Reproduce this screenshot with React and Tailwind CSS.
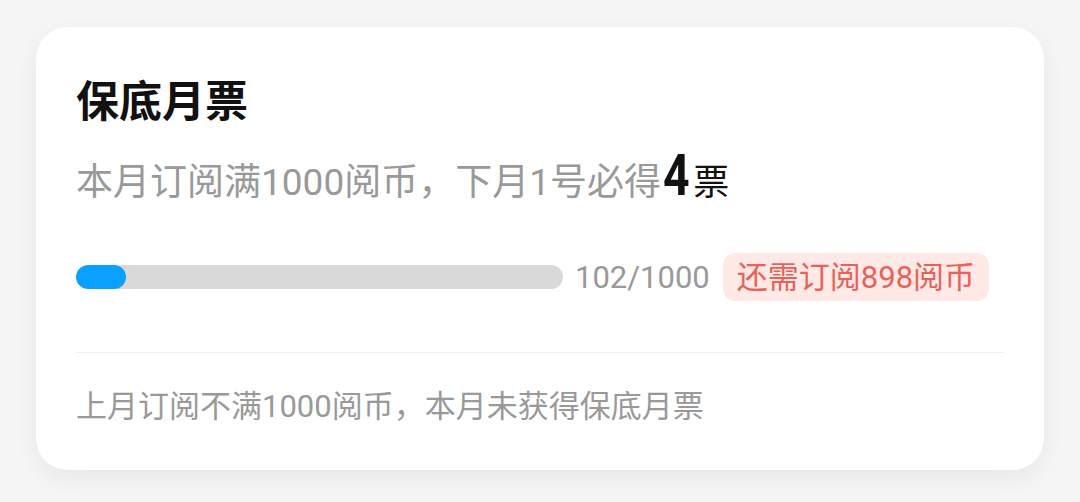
import React from "react";

const FONT = { fontFamily: "Roboto, 'Noto Sans CJK SC', sans-serif" };

const progress = { current: 102, total: 1000 };

export default function App() {
  const pct = (progress.current / progress.total) * 100;

  return (
    <div className="w-[1080px] h-[502px] bg-[#f5f5f5] pt-[27px] pl-[36px]" style={FONT}>
      <div className="w-[1008px] h-[443px] bg-white rounded-[32px] shadow-[0_8px_24px_rgba(0,0,0,0.06)] px-[40px] pt-[54px]">
        {/* Title */}
        <h1 className="text-[43px] leading-none font-bold text-[#111]">保底月票</h1>

        {/* Subtitle */}
        <div className="mt-[22px] flex items-baseline text-[37px] leading-none text-[#999]">
          <span>本月订阅满1000阅币，下月1号必得</span>
          <span className="ml-[2px] mr-[-6px] inline-block origin-left scale-x-[0.8] text-[58px] font-bold text-[#111] leading-none">
            4
          </span>
          <span className="ml-[3px] text-[#111] text-[36px]">票</span>
        </div>

        {/* Progress */}
        <div className="mt-[49px] flex items-center">
          <div className="w-[487px] h-[24px] rounded-full bg-[#d9d9d9] overflow-hidden">
            <div className="h-full rounded-full bg-[#0aa0ff] min-w-[50px]" style={{ width: `${pct}%` }} />
          </div>
          <span className="ml-[12px] text-[31px] leading-none text-[#999]">
            {progress.current}/{progress.total}
          </span>
          <span className="ml-[13px] h-[48px] px-[14px] flex items-center rounded-[12px] bg-[#ffe9e6] text-[31px] leading-none text-[#e8625a]">
            还需订阅{progress.total - progress.current}阅币
          </span>
        </div>

        {/* Divider */}
        <div className="mt-[51px] h-px bg-[#eeeeee]" />

        {/* Footer */}
        <p className="mt-[38px] text-[31px] leading-none text-[#999]">上月订阅不满1000阅币，本月未获得保底月票</p>
      </div>
    </div>
  );
}
